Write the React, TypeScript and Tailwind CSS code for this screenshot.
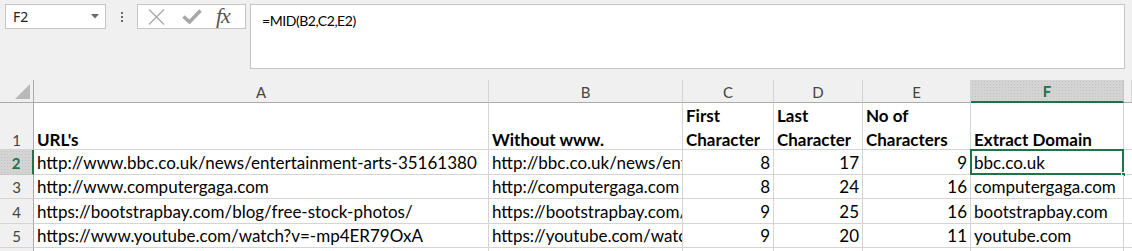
import type { ReactNode } from 'react';

const cellFont = "font-['Lato','Liberation_Sans',sans-serif]";

const columns = ['A', 'B', 'C', 'D', 'E', 'F'];

type Cell = string | number;

const rows: Cell[][] = [
  ["URL's", 'Without www.', 'First\nCharacter', 'Last\nCharacter', 'No of\nCharacters', 'Extract Domain'],
  [
    'http://www.bbc.co.uk/news/entertainment-arts-35161380',
    'http://bbc.co.uk/news/entertainment-arts-35161380',
    8,
    17,
    9,
    'bbc.co.uk',
  ],
  ['http://www.computergaga.com', 'http://computergaga.com', 8, 24, 16, 'computergaga.com'],
  [
    'https://bootstrapbay.com/blog/free-stock-photos/',
    'https://bootstrapbay.com/blog/free-stock-photos/',
    9,
    25,
    16,
    'bootstrapbay.com',
  ],
  [
    'https://www.youtube.com/watch?v=-mp4ER79OxA',
    'https://youtube.com/watch?v=-mp4ER79OxA',
    9,
    20,
    11,
    'youtube.com',
  ],
  ['', '', '', '', '', ''],
];

// selected header cells get a faint dotted fill
const dotted =
  'bg-[#d4d4d4] bg-[radial-gradient(circle,#c2c2c2_0.7px,transparent_0.8px)] bg-[length:3px_3px]';

function FormulaBar() {
  return (
    <div className="flex items-start h-[80px] pt-[4px] pl-[5px]">
      {/* name box */}
      <div className="flex items-center justify-between w-[101px] h-[25px] bg-white border border-[#c6c6c6] pl-[7px] pr-[6px]">
        <span className="font-['Noto_Sans',sans-serif] text-[14px] text-[#222] leading-none">F2</span>
        <svg width="8" height="5" viewBox="0 0 8 5">
          <polygon points="0,0 8,0 4,4.5" fill="#6a6a6a" />
        </svg>
      </div>
      {/* grip dots */}
      <div className="flex flex-col items-center gap-[2px] w-[31px] pt-[8px]">
        <span className="w-[2px] h-[2px] bg-[#6a6a6a]" />
        <span className="w-[2px] h-[2px] bg-[#6a6a6a]" />
        <span className="w-[2px] h-[2px] bg-[#6a6a6a]" />
      </div>
      {/* cancel / enter / fx */}
      <div className="flex items-center w-[109px] h-[25px] bg-white border border-[#c6c6c6] pl-[9px]">
        <svg width="19" height="18" viewBox="0 0 19 18" className="mr-[16px]">
          <path d="M2 1.5 L17 16.5 M17 1.5 L2 16.5" stroke="#a8a8a8" strokeWidth="1.3" />
        </svg>
        <svg width="20" height="15" viewBox="0 0 20 15" className="mr-[14px]">
          <path d="M1.5 7.5 L7.5 13 L18.5 1.5" stroke="#a8a8a8" strokeWidth="3.6" fill="none" />
        </svg>
        <span className="font-['Liberation_Serif',serif] italic text-[22px] leading-none text-[#555] tracking-[-1px] -mt-[2px]">
          fx
        </span>
      </div>
      {/* formula text */}
      <div className="ml-[4px] w-[875px] h-[65px] bg-white border border-[#c6c6c6] pl-[11px] pt-[3px]">
        <span className={`${cellFont} text-[14px] leading-[20px] tracking-[-0.45px] text-black`}>
          =MID(B2,C2,E2)
        </span>
      </div>
    </div>
  );
}

function HeaderCell({ children, selected }: { children?: ReactNode; selected?: boolean }) {
  return (
    <div
      className={
        selected
          ? `flex items-center justify-center ${dotted} border-r border-[#c6c6c6] border-b-2 border-b-[#217346]`
          : 'flex items-center justify-center bg-[#f0f0f0] border-r border-[#d4d4d4] border-b border-b-[#ababab]'
      }
    >
      <span
        className={`${cellFont} text-[15px] leading-none pt-[2px] ${
          selected ? 'font-bold text-[#217346]' : 'text-[#444]'
        }`}
      >
        {children}
      </span>
    </div>
  );
}

function RowHeader({ n, selected }: { n: number; selected?: boolean }) {
  return (
    <div
      className={`flex items-end justify-center overflow-hidden ${
        selected
          ? `${dotted} border-r-2 border-r-[#217346] border-b border-[#c6c6c6]`
          : 'bg-[#f0f0f0] border-r border-r-[#ababab] border-b border-[#d4d4d4]'
      }`}
    >
      <span
        className={`${cellFont} text-[15px] leading-[24px] ${n === 1 ? '-mb-[3px]' : '-mb-[1px]'} ${
          selected ? 'font-bold text-[#217346]' : 'text-[#444]'
        }`}
      >
        {n > 6 ? '' : n}
      </span>
    </div>
  );
}

function DataCell({
  value,
  bold,
  active,
  first,
}: {
  value: Cell;
  bold?: boolean;
  active?: boolean;
  first?: boolean;
}) {
  const numeric = typeof value === 'number';
  return (
    <div
      className={`relative flex items-end min-w-0 border-r border-b border-[#d4d4d4] bg-white ${
        numeric ? 'justify-end pr-[3px]' : 'pl-[3px]'
      }`}
    >
      <span
        className={`${cellFont} block max-w-full overflow-hidden text-[17px] leading-[24px] whitespace-pre text-black ${
          bold ? 'font-bold' : ''
        } ${first ? '-mb-[3px]' : '-mb-[1px]'}`}
      >
        {value}
      </span>
      {active && (
        <>
          <div className="absolute -left-[1px] -top-[1px] right-[-1px] bottom-[-1px] border-2 border-[#217346]" />
          <div className="absolute right-[-3px] bottom-[-3px] w-[5px] h-[5px] bg-[#217346] border border-white" />
        </>
      )}
    </div>
  );
}

export default function App() {
  return (
    <div className="w-[1132px] h-[251px] overflow-hidden bg-[#f0f0f0]">
      <FormulaBar />
      <div className="grid grid-cols-[34px_455px_194px_91px_89px_108px_153px_1fr] grid-rows-[23px_47px_25px_24px_25px_24px_24px]">
        {/* corner */}
        <div className="flex items-end justify-end pr-[3px] pb-[3px] bg-[#f0f0f0] border-r border-r-[#ababab] border-b border-b-[#ababab]">
          <svg width="15" height="15" viewBox="0 0 15 15">
            <polygon points="15,0 15,15 0,15" fill="#b9b9b9" />
          </svg>
        </div>
        {columns.map((c) => (
          <HeaderCell key={c} selected={c === 'F'}>
            {c}
          </HeaderCell>
        ))}
        <HeaderCell />

        {rows.map((row, r) => (
          <div key={r} className="contents">
            <RowHeader n={r + 1} selected={r === 1} />
            {row.map((v, c) => (
              <DataCell
                key={c}
                value={v}
                bold={r === 0}
                first={r === 0}
                active={r === 1 && c === 5}
              />
            ))}
            <div className="border-b border-[#d4d4d4] bg-white" />
          </div>
        ))}
      </div>
    </div>
  );
}
